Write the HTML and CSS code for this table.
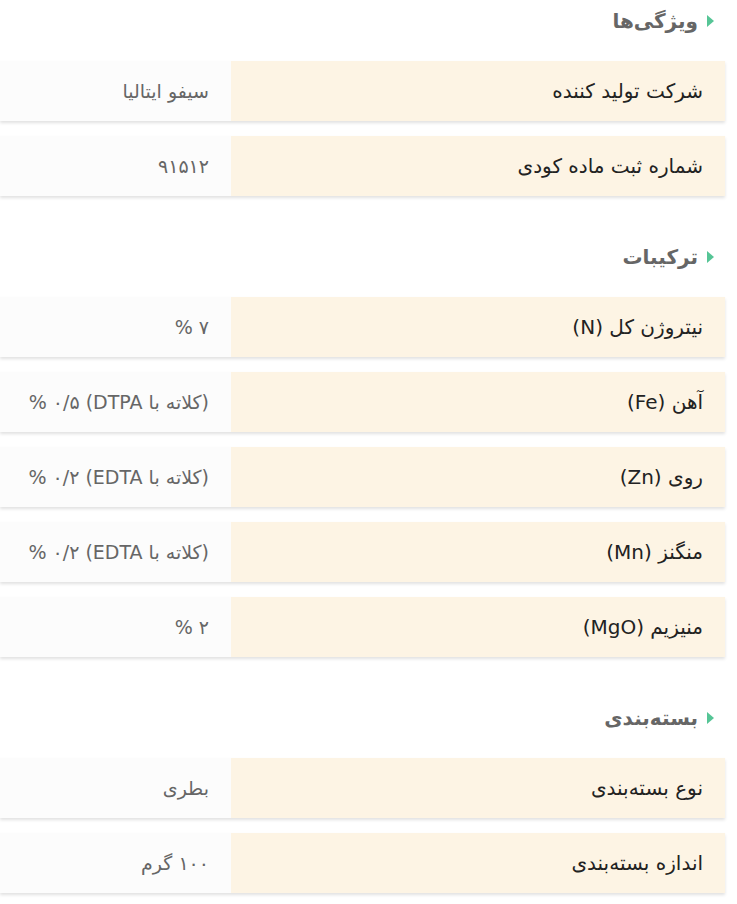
FILE: index.html
```html
<!DOCTYPE html>
<html lang="fa" dir="rtl">
<head>
<meta charset="utf-8">
<link rel="stylesheet" href="styles.css">
</head>
<body>
<div class="page">
  <section class="group">
    <h2 class="group-title"><span class="marker"></span>ویژگی‌ها</h2>
    <div class="rows">
      <div class="row"><div class="label">شرکت تولید کننده</div><div class="value">سیفو ایتالیا</div></div>
      <div class="row"><div class="label">شماره ثبت ماده کودی</div><div class="value">۹۱۵۱۲</div></div>
    </div>
  </section>
  <section class="group">
    <h2 class="group-title"><span class="marker"></span>ترکیبات</h2>
    <div class="rows">
      <div class="row"><div class="label">نیتروژن کل (N)</div><div class="value">۷ %</div></div>
      <div class="row"><div class="label">آهن (Fe)</div><div class="value">(کلاته با DTPA) ۰/۵ %</div></div>
      <div class="row"><div class="label">روی (Zn)</div><div class="value">(کلاته با EDTA) ۰/۲ %</div></div>
      <div class="row"><div class="label">منگنز (Mn)</div><div class="value">(کلاته با EDTA) ۰/۲ %</div></div>
      <div class="row"><div class="label">منیزیم (MgO)</div><div class="value">۲ %</div></div>
    </div>
  </section>
  <section class="group">
    <h2 class="group-title"><span class="marker"></span>بسته‌بندی</h2>
    <div class="rows">
      <div class="row"><div class="label">نوع بسته‌بندی</div><div class="value">بطری</div></div>
      <div class="row"><div class="label">اندازه بسته‌بندی</div><div class="value">۱۰۰ گرم</div></div>
    </div>
  </section>
</div>
</body>
</html>
```
FILE: styles.css
```css
html, body {
  margin: 0;
  padding: 0;
  background: #ffffff;
}
body {
  font-family: "DejaVu Sans", "Noto Sans", sans-serif;
  direction: rtl;
  padding-right: 12px;
}
.page {
  display: flex;
  flex-direction: column;
  gap: 40px;
  padding-bottom: 20px;
}
.group {
  display: flex;
  flex-direction: column;
  gap: 19px;
}
.group-title {
  margin: 0;
  height: 42px;
  display: flex;
  align-items: center;
  gap: 9px;
  padding-right: 11px;
  font-size: 20px;
  font-weight: bold;
  color: #666666;
}
.marker {
  width: 0;
  height: 0;
  border-top: 6px solid transparent;
  border-bottom: 6px solid transparent;
  border-left: 7px solid #56c596;
}
.rows {
  display: flex;
  flex-direction: column;
  gap: 15px;
}
.row {
  display: flex;
  height: 60px;
  box-shadow: 0 2px 3px rgba(0, 0, 0, 0.12);
}
.label {
  flex: 0 0 494px;
  background: #fdf4e4;
  display: flex;
  align-items: center;
  padding-right: 22px;
  box-sizing: border-box;
  font-size: 20px;
  color: #222222;
}
.value {
  flex: 1;
  background: #fcfcfc;
  display: flex;
  align-items: center;
  padding-right: 22px;
  font-size: 19px;
  color: #666666;
}
```
